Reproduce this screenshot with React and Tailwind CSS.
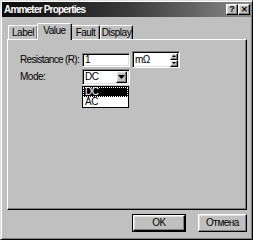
import React from "react";

const raised =
  "border border-t-white border-l-white border-r-black border-b-black shadow-[inset_-1px_-1px_#808080,inset_1px_1px_#dfdfdf]";
const sunken =
  "border border-t-[#808080] border-l-[#808080] border-r-white border-b-white shadow-[inset_1px_1px_#000,inset_-1px_-1px_#dfdfdf]";

function Tab({ label, active, w }) {
  if (active) {
    return (
      <div
        className={`relative z-10 -mb-[1px] -mx-[1px] h-[17px] ${w} bg-[#c0c0c0] rounded-t-[2px] border-t border-l border-r border-t-white border-l-white border-r-black shadow-[inset_-1px_0_#808080] flex items-start justify-center pt-[2px]`}
      >
        {label}
      </div>
    );
  }
  return (
    <div
      className={`h-[14px] ${w} rounded-t-[2px] border-t border-l border-r border-t-white border-l-white border-r-black shadow-[inset_-1px_0_#808080] flex items-center justify-center`}
    >
      {label}
    </div>
  );
}

function DownArrow() {
  return (
    <svg width="7" height="4" viewBox="0 0 7 4">
      <path d="M0 0h7L3.5 4z" fill="#000" />
    </svg>
  );
}

export default function App() {
  return (
    <div
      className="w-[253px] h-[240px] bg-[#c0c0c0] border border-t-[#dfdfdf] border-l-[#dfdfdf] border-r-black border-b-black shadow-[inset_1px_1px_#fff,inset_-1px_-1px_#808080] p-[1px] text-[10px] text-black leading-none whitespace-nowrap tracking-[-0.5px]"
      style={{ fontFamily: "'Liberation Sans', Arial, sans-serif" }}
    >
      <div className="h-[15px] flex items-center justify-between bg-gradient-to-r from-[#0a0a0a] via-[#3a3a3a] to-[#8c8c8c] pl-[2px] pr-[1px]">
        <span className="text-white font-bold text-[10px] tracking-[-0.8px]">Ammeter Properties</span>
        <div className="flex">
          <div className={`w-[12px] h-[11px] bg-[#c0c0c0] ${raised} flex items-center justify-center font-bold text-[9px] tracking-normal`}>
            ?
          </div>
          <div className={`w-[12px] h-[11px] bg-[#c0c0c0] ${raised} flex items-center justify-center font-bold text-[8px] tracking-normal`}>
            ✕
          </div>
        </div>
      </div>

      <div className="pl-[5px] pt-[5px]">
        <div className="flex items-end h-[17px] pl-[1px]">
          <Tab label="Label" w="w-[30px]" />
          <Tab label="Value" w="w-[35px]" active />
          <Tab label="Fault" w="w-[29px]" />
          <Tab label="Display" w="w-[33px]" />
        </div>

        <div className="relative w-[240px] h-[171px] border border-t-white border-l-white border-r-black border-b-black shadow-[inset_-1px_-1px_#808080] pl-[12px] pt-[11px]">
          <div className="flex items-center h-[17px]">
            <span className="w-[62px] tracking-[-0.65px]">Resistance (R):</span>
            <div className={`w-[48px] h-[14px] bg-white ${sunken} flex items-center pl-[2px]`}>1</div>
            <div className={`ml-[2px] w-[48px] h-[17px] bg-white ${sunken} flex items-center justify-between pl-[2px] pr-[1px]`}>
              <span>mΩ</span>
              <div className="flex flex-col">
                <div className={`w-[8px] h-[7px] bg-[#c0c0c0] ${raised} flex items-center justify-center`}>
                  <svg width="4" height="2" viewBox="0 0 4 2">
                    <path d="M2 0L4 2H0z" fill="#000" />
                  </svg>
                </div>
                <div className={`w-[8px] h-[7px] bg-[#c0c0c0] ${raised} flex items-center justify-center`}>
                  <svg width="4" height="2" viewBox="0 0 4 2">
                    <path d="M0 0h4L2 2z" fill="#000" />
                  </svg>
                </div>
              </div>
            </div>
          </div>

          <div className="flex items-center h-[17px]">
            <span className="w-[62px]">Mode:</span>
            <div className={`relative w-[48px] h-[16px] bg-white ${sunken} flex items-center justify-between pl-[2px] pr-[2px]`}>
              <span>DC</span>
              <div className={`w-[11px] h-[12px] bg-[#c0c0c0] ${raised} flex items-center justify-center`}>
                <DownArrow />
              </div>
              <div className="absolute left-[-1px] top-[16px] w-[47px] bg-white border border-black">
                <div className="h-[10px] bg-black text-white border border-dotted border-white flex items-center pl-[1px]">DC</div>
                <div className="h-[10px] flex items-center pl-[2px]">AC</div>
              </div>
            </div>
          </div>
        </div>

        <div className="flex justify-end gap-[12px] pr-[4px] pt-[4px]">
          <div className="w-[54px] h-[18px] border border-black">
            <div className={`w-full h-full ${raised} flex items-center justify-center`}>OK</div>
          </div>
          <div className={`w-[49px] h-[18px] ${raised} flex items-center justify-center`}>Отмена</div>
        </div>
      </div>
    </div>
  );
}
